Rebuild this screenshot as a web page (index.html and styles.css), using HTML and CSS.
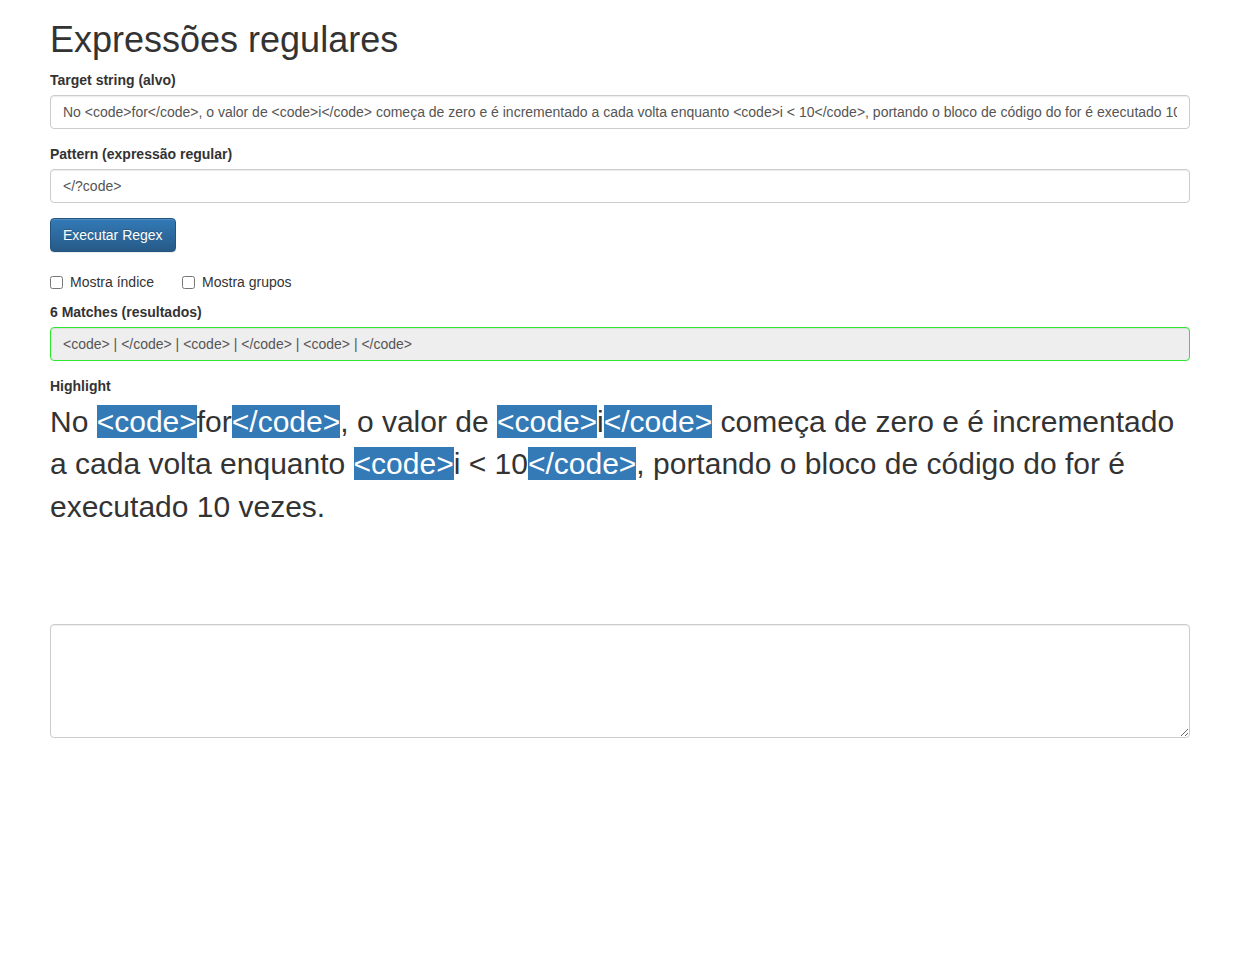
FILE: index.html
```html
<!DOCTYPE html>
<html lang="pt">
<head>
<meta charset="utf-8">
<title>Expressões regulares</title>
<link rel="stylesheet" href="styles.css">
</head>
<body>
<div class="container">
  <h1 class="title">Expressões regulares</h1>
  <div class="form-group">
    <label class="control-label" for="target">Target string (alvo)</label>
    <input class="form-control" id="target" type="text" value="No &lt;code&gt;for&lt;/code&gt;, o valor de &lt;code&gt;i&lt;/code&gt; começa de zero e é incrementado a cada volta enquanto &lt;code&gt;i &lt; 10&lt;/code&gt;, portando o bloco de código do for é executado 10 vezes.">
  </div>
  <div class="form-group">
    <label class="control-label" for="pattern">Pattern (expressão regular)</label>
    <input class="form-control" id="pattern" type="text" value="&lt;/?code&gt;">
  </div>
  <button class="btn btn-primary" type="button">Executar Regex</button>
  <div class="checkbox-row">
    <label class="checkbox-inline"><input type="checkbox"> Mostra índice</label>
    <label class="checkbox-inline"><input type="checkbox"> Mostra grupos</label>
  </div>
  <div class="form-group">
    <label class="control-label" for="result">6 Matches (resultados)</label>
    <input class="form-control result" id="result" type="text" readonly value="&lt;code&gt; | &lt;/code&gt; | &lt;code&gt; | &lt;/code&gt; | &lt;code&gt; | &lt;/code&gt;">
  </div>
  <div class="form-group highlight-group">
    <label class="control-label">Highlight</label>
    <p class="highlight">No <span class="hl">&lt;code&gt;</span>for<span class="hl">&lt;/code&gt;</span>, o valor de <span class="hl">&lt;code&gt;</span>i<span class="hl">&lt;/code&gt;</span> começa de zero e é incrementado a cada volta enquanto <span class="hl">&lt;code&gt;</span>i &lt; 10<span class="hl">&lt;/code&gt;</span>, portando o bloco de código do for é executado 10 vezes.</p>
  </div>
  <textarea class="form-control notes" rows="5"></textarea>
</div>
</body>
</html>
```
FILE: styles.css
```css
* { box-sizing: border-box; }
html, body { margin: 0; padding: 0; }
body {
  font-family: "Liberation Sans", Arial, Helvetica, sans-serif;
  font-size: 14px;
  line-height: 1.42857143;
  color: #333;
  background: #fff;
}
.container {
  width: 1170px;
  margin: 0 auto;
  padding: 0 15px;
}
.title {
  font-size: 36px;
  font-weight: 500;
  line-height: 1.1;
  margin: 20px 0 10px;
}
.form-group { margin-bottom: 15px; }
.control-label {
  display: inline-block;
  font-weight: bold;
  margin-bottom: 5px;
  max-width: 100%;
}
.form-control {
  display: block;
  width: 100%;
  height: 34px;
  padding: 6px 12px;
  font-family: inherit;
  font-size: 14px;
  line-height: 1.42857143;
  color: #555;
  background: #fff;
  border: 1px solid #ccc;
  border-radius: 4px;
  box-shadow: inset 0 1px 1px rgba(0,0,0,.075);
  margin: 0;
}
.form-control.result {
  background: #eee;
  border-color: #2ee82e;
}
.btn {
  display: inline-block;
  padding: 6px 12px;
  font-family: inherit;
  font-size: 14px;
  line-height: 1.42857143;
  border-radius: 4px;
  border: 1px solid transparent;
  cursor: pointer;
  margin: 0;
}
.btn-primary {
  color: #fff;
  background-image: linear-gradient(to bottom, #337ab7 0, #265a88 100%);
  border-color: #245580;
  text-shadow: 0 -1px 0 rgba(0,0,0,.2);
  box-shadow: inset 0 1px 0 rgba(255,255,255,.15), 0 1px 1px rgba(0,0,0,.075);
}
.checkbox-row {
  margin: 20px 0 10px;
  display: flex;
  gap: 28px;
}
.checkbox-inline {
  display: inline-flex;
  align-items: center;
  gap: 7px;
  font-weight: normal;
  cursor: pointer;
}
.checkbox-inline input {
  width: 13px;
  height: 13px;
  margin: 1px 0 0 0;
}
.highlight {
  font-size: 30px;
  line-height: 1.42857143;
  margin: 0 0 95px;
}
.highlight-group { margin-bottom: 0; }
.hl {
  background: #337ab7;
  color: #fff;
}
.notes {
  height: auto;
  resize: vertical;
  border-color: #ccc;
}
```
